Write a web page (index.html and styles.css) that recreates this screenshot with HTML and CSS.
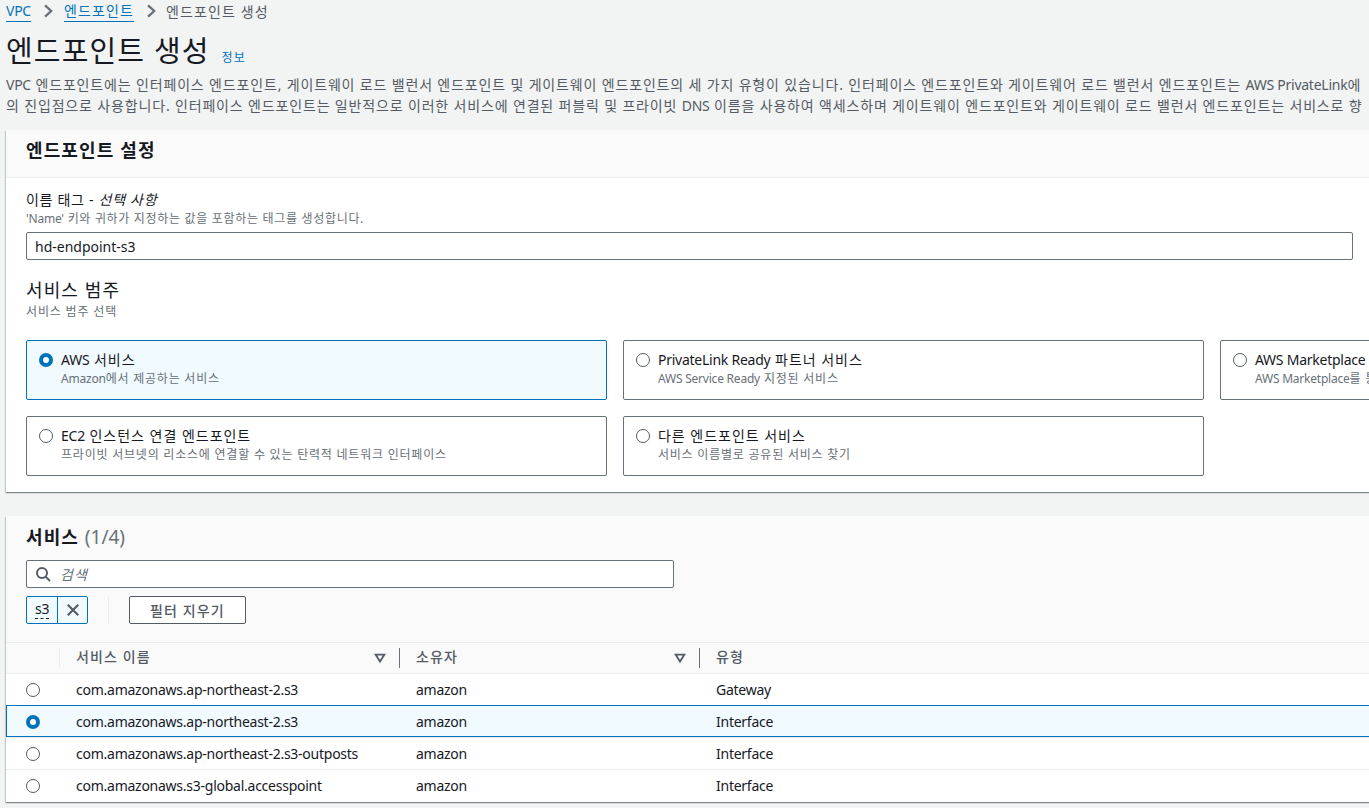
FILE: index.html
```html
<!DOCTYPE html>
<html lang="ko">
<head>
<meta charset="utf-8">
<title>엔드포인트 생성</title>
<link rel="stylesheet" href="styles.css">
</head>
<body>
<main class="page">
  <nav class="crumbs">
    <a class="crumb-link lat">VPC</a>
    <svg class="crumb-sep" viewBox="0 0 16 16"><path d="M3.500 1.500L10.500 8l-7 6.500"/></svg>
    <a class="crumb-link">엔드포인트</a>
    <svg class="crumb-sep sep-2" viewBox="0 0 16 16"><path d="M3.500 1.500L10.500 8l-7 6.500"/></svg>
    <span class="crumb-current">엔드포인트 생성</span>
  </nav>
  <header class="head">
    <h1 class="title">엔드포인트 생성</h1>
    <a class="info">정보</a>
  </header>
  <p class="desc"><span class="lat">VPC</span> 엔드포인트에는 인터페이스 엔드포인트, 게이트웨이 로드 밸런서 엔드포인트 및 게이트웨이 엔드포인트의 세 가지 유형이 있습니다. 인터페이스 엔드포인트와 게이트웨어 로드 밸런서 엔드포인트는 <span class="lat">AWS PrivateLink</span>에</p>
  <p class="desc">의 진입점으로 사용합니다. 인터페이스 엔드포인트는 일반적으로 이러한 서비스에 연결된 퍼블릭 및 프라이빗 <span class="lat">DNS</span> 이름을 사용하여 액세스하며 게이트웨이 엔드포인트와 게이트웨이 로드 밸런서 엔드포인트는 서비스로 향</p>

  <section class="panel settings">
    <div class="panel-head"><h2 class="panel-title">엔드포인트 설정</h2></div>
    <div class="panel-body">
      <div class="label">이름 태그 - <i class="opt">선택 사항</i></div>
      <div class="hint"><span class="lat">'Name'</span> 키와 귀하가 지정하는 값을 포함하는 태그를 생성합니다.</div>
      <div class="input name-input"><span class="val">hd-endpoint-s3</span></div>
      <h3 class="sub-title">서비스 범주</h3>
      <div class="sub-hint">서비스 범주 선택</div>
      <div class="cards">
        <div class="card selected"><span class="radio on"></span><div><div class="card-title"><span class="lat">AWS</span> 서비스</div><div class="card-sub"><span class="lat">Amazon</span>에서 제공하는 서비스</div></div></div>
        <div class="card"><span class="radio"></span><div><div class="card-title"><span class="lat">PrivateLink Ready</span> 파트너 서비스</div><div class="card-sub"><span class="lat">AWS Service Ready</span> 지정된 서비스</div></div></div>
        <div class="card"><span class="radio"></span><div><div class="card-title"><span class="lat">AWS Marketplace</span> 서비스</div><div class="card-sub"><span class="lat">AWS Marketplace</span>를 통해 구매한 서비스</div></div></div>
        <div class="card"><span class="radio"></span><div><div class="card-title"><span class="lat">EC2</span> 인스턴스 연결 엔드포인트</div><div class="card-sub">프라이빗 서브넷의 리소스에 연결할 수 있는 탄력적 네트워크 인터페이스</div></div></div>
        <div class="card"><span class="radio"></span><div><div class="card-title">다른 엔드포인트 서비스</div><div class="card-sub">서비스 이름별로 공유된 서비스 찾기</div></div></div>
      </div>
    </div>
  </section>

  <section class="panel services">
    <div class="svc-top">
      <h2 class="panel-title">서비스 <span class="count">(1/4)</span></h2>
      <div class="input search">
        <svg class="search-icon" viewBox="0 0 16 16"><circle cx="7" cy="7" r="5"/><path d="M10.600 10.600L15 15"/></svg>
        <i class="placeholder">검색</i>
      </div>
      <div class="filters">
        <div class="token"><span class="token-text"><span class="token-val lat">s3</span></span><span class="token-x"><svg viewBox="0 0 16 16"><path d="M2 2l12 12M14 2L2 14"/></svg></span></div>
        <span class="filter-sep"></span>
        <button class="btn">필터 지우기</button>
      </div>
    </div>
    <div class="table">
      <div class="row thead">
        <div class="c-radio"></div>
        <div class="c-name"><span>서비스 이름</span><svg class="sort" viewBox="0 0 16 16"><path d="M3 4h10l-5 8z"/></svg></div>
        <div class="c-owner"><span>소유자</span><svg class="sort" viewBox="0 0 16 16"><path d="M3 4h10l-5 8z"/></svg></div>
        <div class="c-type"><span>유형</span></div>
      </div>
      <div class="row"><div class="c-radio"><span class="radio"></span></div><div class="c-name lat">com.amazonaws.ap-northeast-2.s3</div><div class="c-owner lat">amazon</div><div class="c-type lat">Gateway</div></div>
      <div class="row picked"><div class="c-radio"><span class="radio on"></span></div><div class="c-name lat">com.amazonaws.ap-northeast-2.s3</div><div class="c-owner lat">amazon</div><div class="c-type lat">Interface</div></div>
      <div class="row"><div class="c-radio"><span class="radio"></span></div><div class="c-name lat">com.amazonaws.ap-northeast-2.s3-outposts</div><div class="c-owner lat">amazon</div><div class="c-type lat">Interface</div></div>
      <div class="row"><div class="c-radio"><span class="radio"></span></div><div class="c-name lat">com.amazonaws.s3-global.accesspoint</div><div class="c-owner lat">amazon</div><div class="c-type lat">Interface</div></div>
    </div>
  </section>
</main>
</body>
</html>
```
FILE: styles.css
```css
* { box-sizing: border-box; }
html, body { margin: 0; height: 808px; overflow: hidden; background: #f2f3f3; }
body { font-family: "Noto Sans", "Open Sans", "Noto Sans CJK KR", sans-serif; font-size: 14px; letter-spacing: .08em; color: #16191f; }
.lat { letter-spacing: -.018em; }
.page { width: 1500px; padding-left: 6px; }

.crumbs { display: flex; align-items: center; height: 22px; white-space: nowrap; }
.crumb-link { color: #0073bb; border-bottom: 1px solid #0073bb; line-height: 21px; height: 22px; }
.crumb-sep { width: 14px; height: 14px; margin: 0 8px 0 11px; fill: none; stroke: #687078; stroke-width: 2.6; }
.sep-2 { margin-right: 7px; }
.crumb-current { color: #545b64; }

.head { display: flex; align-items: baseline; padding-top: 12px; height: 46px; }
.title { margin: 0; font-size: 29px; line-height: 34px; font-weight: 400; letter-spacing: .04em; white-space: nowrap; }
.info { font-size: 12px; color: #0073bb; margin-left: 12px; }

.desc { margin: 0; height: 21px; line-height: 21px; color: #545b64; letter-spacing: .06em; white-space: nowrap; }
.desc:first-of-type { margin-top: 6px; }

.panel { background: #fff; box-shadow: 0 1px 1px 0 rgba(0,28,36,.3), 1px 1px 1px 0 rgba(0,28,36,.15), -1px 1px 1px 0 rgba(0,28,36,.15); }
.settings { margin-top: 14px; height: 362px; }
.panel-head { height: 48px; background: #fafafa; border-bottom: 1px solid #eaeded; padding: 8px 20px; }
.panel-title { margin: 0; font-size: 18px; line-height: 24px; font-weight: 700; }
.panel-body { padding: 12px 20px 0; }

.label { line-height: 20px; letter-spacing: .05em; }
.opt { font-style: italic; }
.hint { font-size: 12px; line-height: 16px; margin-top: 1px; color: #687078; letter-spacing: .057em; }
.input { border: 1px solid #687078; border-radius: 2px; background: #fff; height: 28px; display: flex; align-items: center; }
.name-input { width: 1327px; margin-top: 5px; padding-left: 8px; }
.val { letter-spacing: 0; }
.sub-title { margin: 16px 0 0; font-size: 18px; line-height: 28px; font-weight: 400; }
.sub-hint { font-size: 12px; line-height: 16px; color: #687078; letter-spacing: .07em; }

.cards { display: grid; grid-template-columns: repeat(3, 581.4px); grid-auto-rows: 60px; column-gap: 15.6px; row-gap: 16px; margin-top: 20px; }
.card { display: flex; gap: 8px; border: 1px solid #687078; border-radius: 2px; padding: 9px 12px 0; white-space: nowrap; overflow: hidden; }
.card.selected { border-color: #0073bb; background: #f1faff; }
.card .radio { margin-top: 3px; }
.card-title { line-height: 20px; letter-spacing: .07em; }
.card-sub { font-size: 12px; line-height: 16px; color: #687078; margin-top: 1px; letter-spacing: .065em; }

.radio { display: block; flex: none; width: 14px; height: 14px; border-radius: 50%; border: 1px solid #545b64; background: #fff; }
.radio.on { border: 4px solid #0073bb; }

.services { margin-top: 24px; }
.svc-top { background: #fafafa; padding: 9px 20px 18px; height: 126px; }
.count { font-weight: 400; color: #687078; letter-spacing: 0; font-size: 19px; }
.search { width: 648px; margin-top: 11px; padding-left: 8px; gap: 9px; }
.search-icon { width: 16px; height: 16px; fill: none; stroke: #545b64; stroke-width: 2; }
.placeholder { color: #687078; }
.filters { display: flex; align-items: center; margin-top: 8px; }
.token { display: flex; height: 28px; border: 1px solid #0073bb; border-radius: 2px; background: #f1faff; }
.token-text { width: 31px; padding-left: 8px; border-right: 1px solid #0073bb; line-height: 24px; }
.token-val { border-bottom: 1px dashed #16191f; }
.token-x { width: 29px; display: flex; align-items: center; justify-content: center; }
.token-x svg { width: 14px; height: 14px; fill: none; stroke: #545b64; stroke-width: 2.4; }
.filter-sep { width: 1px; height: 28px; background: #eaeded; margin: 0 20px; }
.btn { width: 117px; height: 28px; padding: 0; border: 1px solid #545b64; border-radius: 2px; background: #fff; color: #545b64; font: inherit; letter-spacing: .08em; font-weight: 500; }

.table { width: 100%; padding-bottom: 1px; }
.row { display: grid; grid-template-columns: 54px 340px 300px 1fr; align-items: center; height: 32px; border-top: 1px solid #eaeded; }
.row > div { display: flex; align-items: center; }
.c-radio { padding-left: 20px; }
.c-name, .c-owner, .c-type { padding-left: 16px; padding-right: 12px; height: 20px; }
.thead { height: 31px; background: #fafafa; color: #545b64; font-weight: 500; }
.thead > div span { position: relative; top: -2px; }
.thead .c-name, .thead .c-owner { justify-content: space-between; border-right: 1px solid #687078; }
.thead .c-radio { height: 20px; border-right: 1px solid #eaeded; }
.sort { width: 14px; height: 14px; fill: none; stroke: #545b64; stroke-width: 2; }
.picked { outline: 1px solid #0073bb; outline-offset: -1px; background: #f1faff; }
```
